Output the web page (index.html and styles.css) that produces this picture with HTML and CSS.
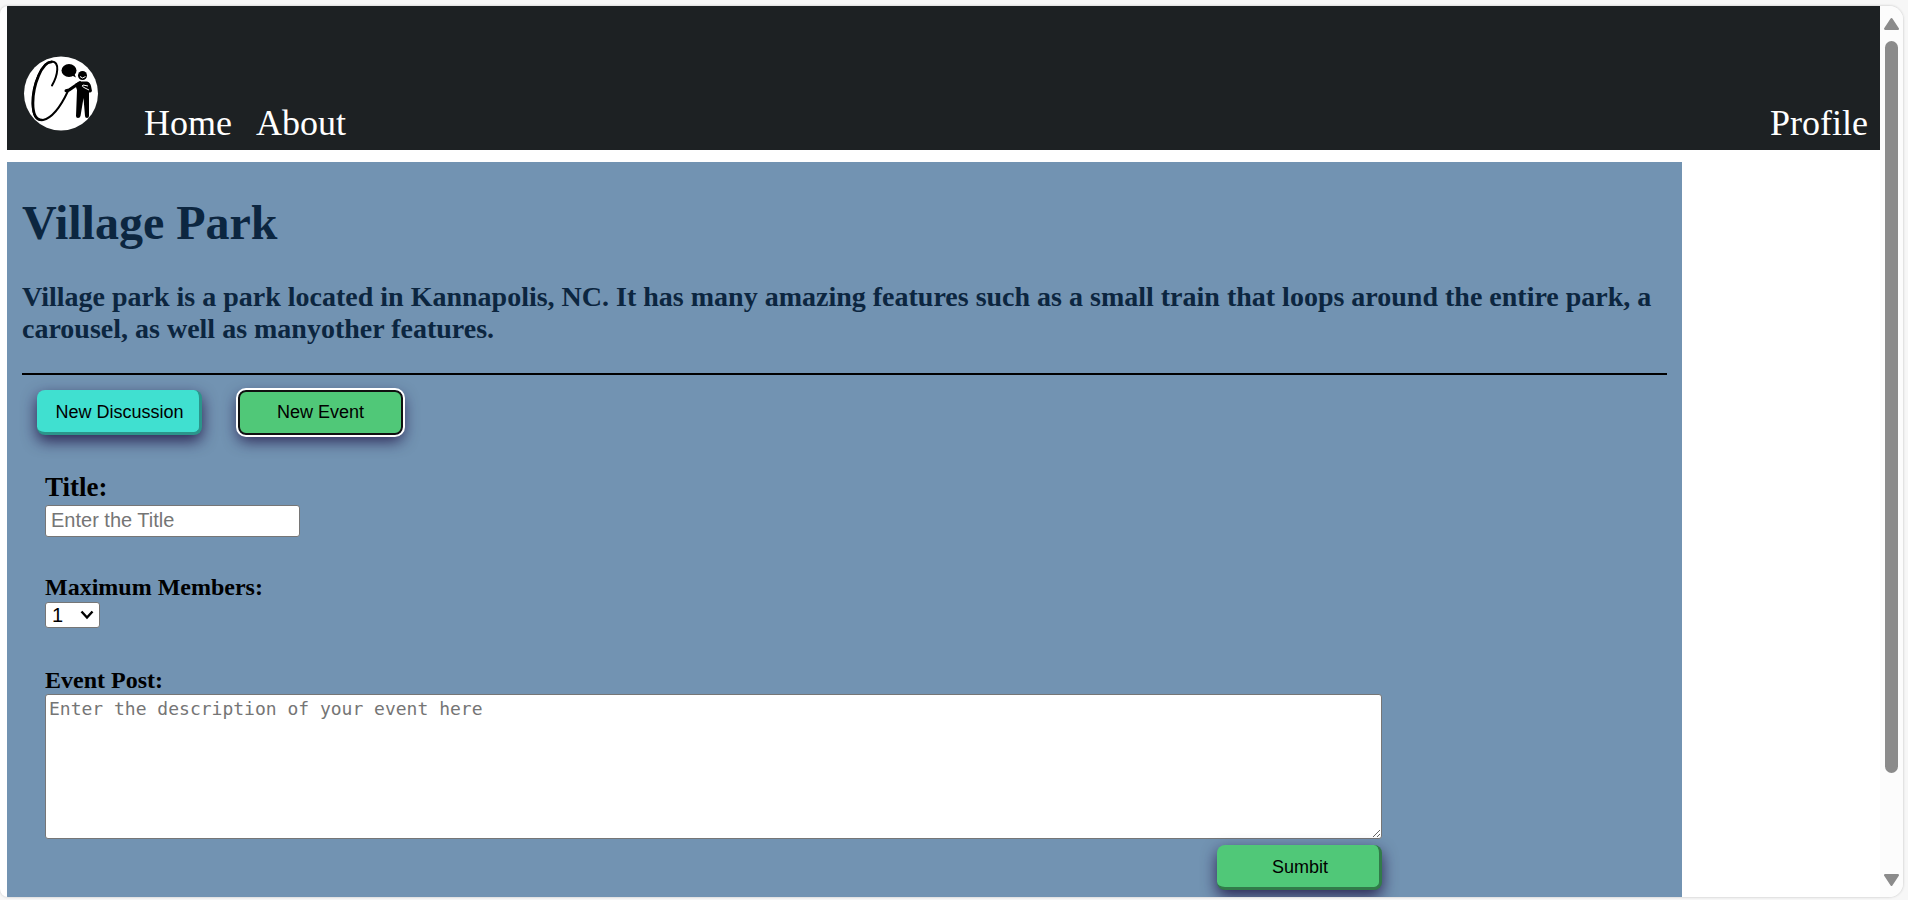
FILE: index.html
```html
<!DOCTYPE html>
<html lang="en">
<head>
<meta charset="utf-8">
<title>Village Park</title>
<link rel="stylesheet" href="styles.css">
</head>
<body>
<div class="window">
  <div class="page">
    <header class="navbar">
      <svg class="logo" viewBox="0 0 76 76" role="img" aria-label="Logo">
        <circle cx="38" cy="37.500" r="37" fill="#fff"/>
        <g fill="none" stroke="#000" stroke-linecap="round">
          <path d="M29 29.500C35 19 37 6 29 5.500C19 5 9 29 9.500 48C10 59 13 65 20 64C29 62 38 50 45 35" stroke-width="2"/>
          <path d="M28.500 6C19 6 10 29 10 47C10 58 13 64 19 64" stroke-width="2.600"/>
          <path d="M43 34.800L46 34L57 26.500" stroke-width="3"/>
        </g>
        <ellipse cx="46" cy="14.500" rx="7.500" ry="6.500"/>
        <path d="M48 19L53 21.500L51 17Z"/>
        <circle cx="59.500" cy="19.500" r="4.500"/>
        <path d="M57 20.500Q59.500 23.500 62.500 20.500" fill="none" stroke="#fff"/>
        <path d="M52 28Q55 25.500 59 25.500H64Q67 26 68 30L69 35Q68 37 66 36.500V60Q66 62 64 62Q62 62 62 60L60.500 42L57.500 60Q57 62 55 62Q53 62 53 60L54 34Z"/>
        <path d="M65 30L60 29Q58 30 61 31.500L66 34" fill="none" stroke="#fff" stroke-width="1"/>
      </svg>
      <nav class="links">
        <a href="#">Home</a>
        <a href="#">About</a>
      </nav>
      <a class="profile" href="#">Profile</a>
    </header>
    <main class="park">
      <h1>Village Park</h1>
      <h2>Village park is a park located in Kannapolis, NC. It has many amazing features such as a small train that loops around the entire park, a carousel, as well as manyother features.</h2>
      <hr>
      <div class="actions">
        <button class="btn btn-discussion" type="button">New Discussion</button>
        <button class="btn btn-event btn-focused" type="button">New Event</button>
      </div>
      <form class="event-form">
        <div class="field">
          <label class="label-title" for="title">Title:</label>
          <input id="title" type="text" placeholder="Enter the Title">
        </div>
        <div class="field">
          <label for="members">Maximum Members:</label>
          <span class="select">
            <select id="members"><option>1</option><option>2</option><option>3</option></select>
            <svg viewBox="0 0 14 10" aria-hidden="true"><path d="M1.500 1.500L7 7.500L12.500 1.500" fill="none" stroke="#000" stroke-width="2.400"/></svg>
          </span>
        </div>
        <div class="field">
          <label for="post">Event Post:</label>
          <textarea id="post" placeholder="Enter the description of your event here"></textarea>
        </div>
        <button class="btn btn-event btn-submit" type="button">Sumbit</button>
      </form>
    </main>
  </div>
  <div class="scrollbar" aria-hidden="true">
    <svg viewBox="0 0 14 11"><path d="M7 1L13 10H1Z"/></svg>
    <div class="track"><div class="thumb"></div></div>
    <svg viewBox="0 0 14 11"><path d="M1 1H13L7 10Z"/></svg>
  </div>
</div>
</body>
</html>
```
FILE: styles.css
```css
* { box-sizing: border-box; }
body {
  margin: 0;
  height: 100vh;
  padding: 6px 5px 3px 0;
  background: #f7f7f7;
  font-family: "Liberation Serif", "Times New Roman", serif;
  overflow: hidden;
}
.window {
  display: flex;
  height: 100%;
  background: #fff;
  border-radius: 8px 14px 14px 8px;
  box-shadow: 0 0 2px 1px #dcdcdc;
  overflow: hidden;
}
.page {
  flex: 1;
  display: flex;
  flex-direction: column;
  gap: 12px;
  padding-left: 7px;
  overflow: hidden;
}
.navbar {
  display: flex;
  align-items: flex-end;
  flex-shrink: 0;
  padding: 50px 12px 6px 16px;
  background: #1d2123;
}
.logo {
  width: 76px;
  height: 76px;
  margin-bottom: 12px;
}
.links {
  display: flex;
  gap: 24px;
  margin-left: 45px;
}
.navbar a {
  color: #fff;
  font-size: 36px;
  line-height: 42px;
  text-decoration: none;
}
.profile { margin-left: auto; }
.park {
  flex: 1 0 auto;
  width: 89.45%;
  padding: 33px 15px;
  background: #7293b2;
}
h1, h2 { margin: 0; color: #0c2640; }
h1 { font-size: 48px; line-height: 56px; }
h2 { margin-top: 30px; font-size: 28px; line-height: 32px; }
hr { margin: 28px 0 15px; border: 0; border-top: 2px solid #000; }
.actions { display: flex; gap: 36px; padding-left: 15px; }
.btn {
  width: 165px;
  height: 45px;
  padding: 3px 0 0 3px;
  border-radius: 8px;
  color: #000;
  font: 18px "Liberation Sans", Arial, sans-serif;
  box-shadow: 0 6px 15px rgba(25, 10, 60, .8);
}
.btn-discussion {
  background: #40e0d0;
  border: solid #40e0d0;
  border-width: 0 3px 3px 0;
  border-right-color: #2b958b;
  border-bottom-color: #2b958b;
}
.btn-event {
  background: #50c878;
  border: solid #50c878;
  border-width: 0 3px 3px 0;
  border-right-color: #317b49;
  border-bottom-color: #317b49;
}
.btn-focused {
  padding: 0;
  border: 2px solid #101010;
  outline: 2px solid #fff;
}
.event-form {
  display: flex;
  flex-direction: column;
  gap: 36px;
  margin-top: 36px;
  padding: 0 285px 0 23px;
}
.field { display: flex; flex-direction: column; align-items: flex-start; }
label { font-size: 24px; line-height: 28px; font-weight: bold; color: #000; }
.label-title { margin-bottom: 2px; font-size: 27px; line-height: 32px; }
input, select, textarea {
  background: #fff;
  border: 1px solid #767676;
  border-radius: 3px;
  color: #000;
}
::placeholder { color: #757575; }
input {
  width: 255px;
  height: 32px;
  padding: 0 5px 2px;
  font: 20px "Liberation Sans", Arial, sans-serif;
}
.select { display: grid; align-items: center; width: 55px; margin: 1px 0 2px; }
.select > * { grid-area: 1 / 1; }
.select svg { width: 14px; height: 10px; margin-right: 6px; justify-self: end; pointer-events: none; }
select {
  width: 100%;
  height: 26px;
  padding: 0 6px;
  appearance: none;
  font: 20px "Liberation Sans", Arial, sans-serif;
}
textarea {
  width: 100%;
  height: 145px;
  padding: 3px;
  font: 18px "DejaVu Sans Mono", monospace;
}
.btn-submit { align-self: flex-end; margin-top: -30px; }
.scrollbar {
  display: flex;
  flex-direction: column;
  align-items: center;
  width: 23px;
  padding: 12px 0 11px;
  background: #fcfcfc;
}
.scrollbar svg {
  width: 15px;
  height: 12px;
  fill: #8b8b8b;
  stroke: #8b8b8b;
  stroke-width: 2;
  stroke-linejoin: round;
}
.track { flex: 1; width: 13px; padding: 11px 0; }
.thumb { height: 89.1%; border-radius: 7px; background: #8b8b8b; }
```
